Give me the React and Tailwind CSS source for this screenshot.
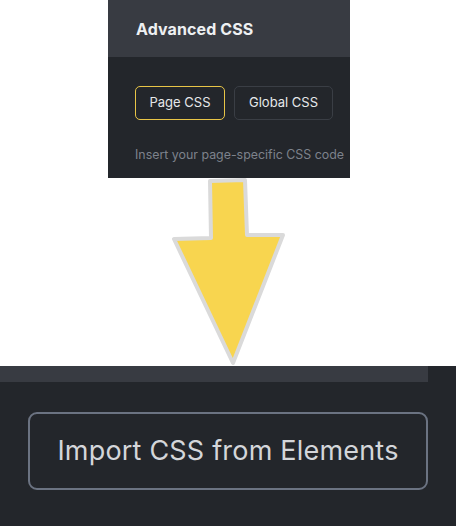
export default function App() {
  const font = { fontFamily: 'Inter, "Noto Sans", sans-serif' };
  return (
    <div className="w-[456px] h-[526px] bg-white flex flex-col overflow-hidden" style={font}>
      <div className="ml-[108px] w-[242px] h-[178px] flex flex-col bg-[#23262b] overflow-hidden">
        <div className="h-[57px] shrink-0 bg-[#383b42] flex items-center pl-[28px]">
          <span className="text-[16px] font-bold text-[#eef0f2] tracking-[0.1px]">Advanced CSS</span>
        </div>
        <div className="pl-[27px] pt-[29px] flex flex-col">
          <div className="flex gap-[9px]">
            <div className="w-[90px] h-[34px] rounded-[5px] border-[1.5px] border-[#e8c547] flex items-center justify-center text-[13px] text-[#e6e8ea]">Page CSS</div>
            <div className="w-[99px] h-[34px] rounded-[5px] border-[1.5px] border-[#3a3e45] flex items-center justify-center text-[13px] text-[#e6e8ea]">Global CSS</div>
          </div>
          <div className="mt-[26px] text-[12.4px] text-[#7d828b] whitespace-nowrap">Insert your page-specific CSS code</div>
        </div>
      </div>
      <svg width="456" height="188" viewBox="0 178 456 188" className="block shrink-0">
        <polygon
          points="210,181 245,180 247,235 283,235 233,363 174,239 211,238"
          fill="#f8d54f"
          stroke="#dadada"
          strokeWidth="4"
          strokeLinejoin="round"
        />
      </svg>
      <div className="flex-1 bg-[#23262b] flex flex-col">
        <div className="w-[428px] h-[16px] bg-[#383b42]" />
        <div className="pl-[28px] pt-[30px]">
          <div className="w-[400px] h-[78px] rounded-[9px] border-2 border-[#6b7382] flex items-center justify-center text-[27px] tracking-[0.2px] text-[#d4d6da]">
            Import CSS from Elements
          </div>
        </div>
      </div>
    </div>
  );
}
